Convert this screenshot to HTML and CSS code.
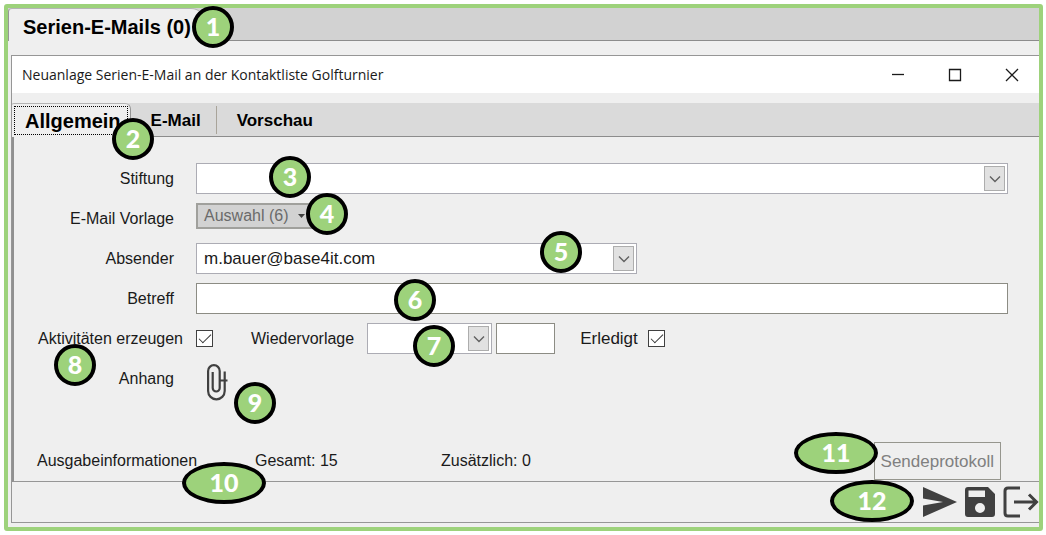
FILE: index.html
```html
<!DOCTYPE html>
<html lang="de">
  <head>
    <meta charset="UTF-8" />
    <meta name="viewport" content="width=device-width, initial-scale=1.0" />
    <title>Serien-E-Mails</title>
    <link rel="stylesheet" href="styles.css">
  </head>
  <body>
    <div class="frame">
      <div class="main-tabs">
        <button type="button" class="main-tab">Serien-E-Mails (0)</button>
        <span class="badge badge-1">1</span>
      </div>

      <div class="window">
        <div class="title-bar">
          <span class="title">Neuanlage Serien-E-Mail an der Kontaktliste Golfturnier</span>
          <div class="window-buttons">
            <button type="button" aria-label="Minimieren">
              <svg width="14" height="14" viewBox="0 0 14 14"><path d="M1 6.5h12" /></svg>
            </button>
            <button type="button" aria-label="Maximieren">
              <svg width="14" height="14" viewBox="0 0 14 14"><path d="M1.5 1.5h11v11h-11z" /></svg>
            </button>
            <button type="button" aria-label="Schließen">
              <svg width="14" height="14" viewBox="0 0 14 14"><path d="M1 1l12 12M13 1L1 13" /></svg>
            </button>
          </div>
        </div>

        <div class="tabs">
          <button type="button" class="tab active"><span>Allgemein</span></button>
          <button type="button" class="tab">E-Mail</button>
          <button type="button" class="tab">Vorschau</button>
          <span class="badge badge-2">2</span>
        </div>

        <form class="panel">
          <div class="row">
            <label for="stiftung">Stiftung</label>
            <div class="select">
              <select id="stiftung"><option></option></select>
              <span class="arrow"><svg width="12" height="8" viewBox="0 0 12 8"><path d="M1 1.5l5 5 5-5" /></svg></span>
            </div>
            <span class="badge badge-3">3</span>
          </div>

          <div class="row">
            <label for="vorlage">E-Mail Vorlage</label>
            <button type="button" class="template-button" id="vorlage">
              Auswahl (6)
              <svg width="7" height="4" viewBox="0 0 7 4"><path d="M0 0h7L3.5 4z" /></svg>
            </button>
            <span class="badge badge-4">4</span>
          </div>

          <div class="row">
            <label for="absender">Absender</label>
            <div class="select select-sender">
              <select id="absender"><option>m.bauer@base4it.com</option></select>
              <span class="arrow"><svg width="12" height="8" viewBox="0 0 12 8"><path d="M1 1.5l5 5 5-5" /></svg></span>
            </div>
            <span class="badge badge-5">5</span>
          </div>

          <div class="row">
            <label for="betreff">Betreff</label>
            <input type="text" id="betreff" />
            <span class="badge badge-6">6</span>
          </div>

          <div class="row row-activities">
            <label for="aktivitaeten">Aktivitäten erzeugen</label>
            <div class="fields">
              <input type="checkbox" id="aktivitaeten" checked />
              <label for="wiedervorlage" class="label-resubmit">Wiedervorlage</label>
              <div class="select select-date">
                <select id="wiedervorlage"><option></option></select>
                <span class="arrow"><svg width="12" height="8" viewBox="0 0 12 8"><path d="M1 1.5l5 5 5-5" /></svg></span>
              </div>
              <input type="text" class="time" aria-label="Uhrzeit" />
              <label for="erledigt" class="label-done">Erledigt</label>
              <input type="checkbox" id="erledigt" checked />
            </div>
            <span class="badge badge-7">7</span>
            <span class="badge badge-8">8</span>
          </div>

          <div class="row">
            <label for="anhang">Anhang</label>
            <button type="button" class="attach" id="anhang">
              <svg width="22" height="38" viewBox="0 0 22 38"><path d="M18.7 8.5V28a8.3 8.3 0 0 1-16.6 0V8a5.8 5.8 0 0 1 11.6 0v17a3.5 3.5 0 0 1-7 0V9M13 17.5h8.5" /></svg>
            </button>
            <span class="badge badge-9">9</span>
          </div>

          <div class="info">
            <span>Ausgabeinformationen</span>
            <span>Gesamt: 15</span>
            <span>Zusätzlich: 0</span>
            <button type="button" class="log-button">Sendeprotokoll</button>
            <span class="badge wide badge-10">10</span>
            <span class="badge wide badge-11">11</span>
          </div>
        </form>

        <div class="toolbar">
          <span class="badge wide badge-12">12</span>
          <button type="button" aria-label="Senden">
            <svg width="34" height="30" viewBox="0 0 34 30"><path d="M0 0l34 15L0 30V18.500l20-3.500L0 11.500z" /></svg>
          </button>
          <button type="button" aria-label="Speichern">
            <svg width="30" height="30" viewBox="0 0 30 30"><path fill-rule="evenodd" d="M3 0h20l7 7v20a3 3 0 0 1-3 3H3a3 3 0 0 1-3-3V3a3 3 0 0 1 3-3zM3.500 3.500V10H20V3.500zM15 16a5 5 0 1 0 0 10 5 5 0 0 0 0-10z" /></svg>
          </button>
          <button type="button" aria-label="Beenden">
            <svg class="exit" width="36" height="32" viewBox="0 0 36 32"><path d="M17 2H5Q2 2 2 5v22q0 3 3 3h12M11 16h22M26 8.500l7.500 7.500-7.500 7.500" /></svg>
          </button>
        </div>
      </div>
    </div>
  </body>
</html>
```
FILE: styles.css
```css
* {
  box-sizing: border-box;
}

body {
  margin: 4px 3px 4px 4px;
  background-color: #fff;
  font-family: "Liberation Sans", Arial, sans-serif;
  font-size: 16px;
  color: #1a1a1a;
}

button,
input,
select {
  margin: 0;
  font: inherit;
  color: inherit;
}

button {
  padding: 0;
  border: none;
  background: none;
}

svg {
  display: block;
}

.frame {
  border: 4px solid #9dd27b;
  border-radius: 3px;
  background-color: #efefef;
}

/* Outer tab bar */
.main-tabs {
  position: relative;
  display: flex;
  height: 33px;
  background-color: #d2d2d2;
  border-bottom: 1px solid #8c8c8c;
}

.main-tab {
  height: 33px;
  padding: 4px 14px 0;
  background-color: #efefef;
  border-left: 1px solid #969696;
  border-top: 1px solid #b4b4b4;
  border-radius: 4px 14px 0 0;
  font-size: 20px;
  line-height: 28px;
  font-weight: bold;
  color: #000;
}

/* Window */
.window {
  margin: 14px 0 4px 3px;
  border: 1px solid #969696;
  border-right: none;
}

.title-bar {
  display: flex;
  justify-content: space-between;
  align-items: center;
  height: 37px;
  padding: 0 20px 0 10px;
  background-color: #fff;
}

.title {
  font-family: "Open Sans", "Noto Sans", sans-serif;
  font-size: 14px;
}

.window-buttons {
  display: flex;
  gap: 43px;
}

.window-buttons path {
  fill: none;
  stroke: #1a1a1a;
  stroke-width: 1.3;
}

/* Inner tabs */
.tabs {
  position: relative;
  display: flex;
  height: 34px;
  margin-top: 10px;
  background-color: #dadada;
  border-bottom: 1px solid #8c8c8c;
}

.tab {
  padding: 2px 15px 0 20px;
  font-size: 17px;
  font-weight: bold;
  color: #000;
}

.tab + .tab {
  height: 28px;
  margin-top: 3px;
}

.tab + .tab + .tab {
  border-left: 1px solid #a9a49a;
}

.tab.active {
  height: 34px;
  padding: 2px 2px 3px;
  background-color: #efefef;
  border-right: 1px solid #969696;
  border-top: 1px solid #b4b4b4;
  border-radius: 2px 6px 0 0;
  font-size: 20px;
}

.tab.active span {
  display: block;
  padding: 1px 6px 0 10px;
  border: 1px dotted #000;
  line-height: 26px;
}

/* Form */
.panel {
  padding: 26px 31px 1px 0;
  border-left: 2px solid #909090;
  border-bottom: 1px solid #969696;
}

.row {
  position: relative;
  display: grid;
  grid-template-columns: 160px 1fr;
  column-gap: 22px;
  margin-bottom: 9px;
}

.row label {
  line-height: 31px;
}

.row > label {
  text-align: right;
}

.row-activities {
  grid-template-columns: 169px 1fr;
  column-gap: 13px;
}

input[type="text"] {
  height: 31px;
  width: 100%;
  padding: 0 7px;
  background-color: #fff;
  border: 1px solid #8c8c84;
}

.select {
  position: relative;
  height: 31px;
}

.select select {
  appearance: none;
  width: 100%;
  height: 100%;
  padding: 0 28px 0 7px;
  background-color: #fff;
  border: 1px solid #acacb4;
  border-radius: 0;
  font-size: 17px;
}

.arrow {
  position: absolute;
  top: 3px;
  right: 3px;
  bottom: 3px;
  display: flex;
  justify-content: center;
  align-items: center;
  width: 21px;
  background-color: #e1e1e1;
  border: 1px solid #adadad;
  pointer-events: none;
}

.arrow path {
  fill: none;
  stroke: #606060;
  stroke-width: 1.4;
}

.select-sender {
  width: 441px;
}

.select-date {
  width: 125px;
}

.template-button {
  display: flex;
  align-items: center;
  gap: 10px;
  width: 140px;
  height: 26px;
  padding: 0 6px;
  background-color: #d2d2d2;
  border: 2px solid #a0a09c;
  color: #6a6a6a;
}

.template-button path {
  fill: #404040;
}

.fields {
  display: flex;
  align-items: center;
}

input[type="checkbox"] {
  appearance: none;
  width: 17px;
  height: 17px;
  background-color: #fff;
  border: 1px solid #404040;
}

input[type="checkbox"]:checked::before {
  content: "";
  display: block;
  width: 11px;
  height: 5px;
  margin: 3px 2px;
  border-left: 1px solid #303030;
  border-bottom: 1px solid #303030;
  transform: rotate(-45deg);
}

.label-resubmit {
  margin: 0 13px 0 38px;
}

.label-done {
  margin: 0 10px 0 25px;
  font-size: 17px;
}

input.time {
  width: 59px;
  margin-left: 4px;
}

.attach {
  justify-self: start;
  padding-left: 10px;
}

.attach path {
  fill: none;
  stroke: #404040;
  stroke-width: 2.2;
}

/* Output information */
.info {
  position: relative;
  display: grid;
  grid-template-columns: 218px 186px 1fr auto;
  align-items: center;
  margin-top: 41px;
  margin-right: 7px;
  padding-left: 23px;
}

.log-button {
  height: 38px;
  padding: 2px 6px 0;
  border: 1px solid #96968e;
  font-size: 17px;
  color: #808080;
}

/* Toolbar */
.toolbar {
  position: relative;
  display: flex;
  justify-content: flex-end;
  align-items: center;
  gap: 8px;
  height: 40px;
}

.toolbar path {
  fill: #404040;
}

.toolbar .exit path {
  fill: none;
  stroke: #404040;
  stroke-width: 3;
}

/* Numbered markers */
.badge {
  position: absolute;
  z-index: 1;
  width: 42px;
  height: 42px;
  border: 4px solid #000;
  border-radius: 50%;
  background-color: #9dd27b;
  font-family: Lato, sans-serif;
  font-size: 25px;
  font-weight: 900;
  line-height: 33px;
  text-align: center;
  color: #fff;
}

.badge.wide {
  width: 84px;
}

.badge-1 {
  left: 184px;
  top: -2px;
}

.badge-2 {
  left: 100px;
  top: 15px;
}

.badge-3 {
  left: 255px;
  top: -7px;
}

.badge-4 {
  left: 292px;
  top: -10px;
}

.badge-5 {
  left: 526px;
  top: -12px;
}

.badge-6 {
  left: 380px;
  top: -4px;
}

.badge-7 {
  left: 399px;
  top: 2px;
}

.badge-8 {
  left: 40px;
  top: 21px;
}

.badge-9 {
  left: 220px;
  top: 19px;
}

.badge-10 {
  left: 168px;
  top: 20px;
}

.badge-11 {
  right: 123px;
  top: -10px;
}

.badge-12 {
  right: 125px;
  top: -2px;
}
```
